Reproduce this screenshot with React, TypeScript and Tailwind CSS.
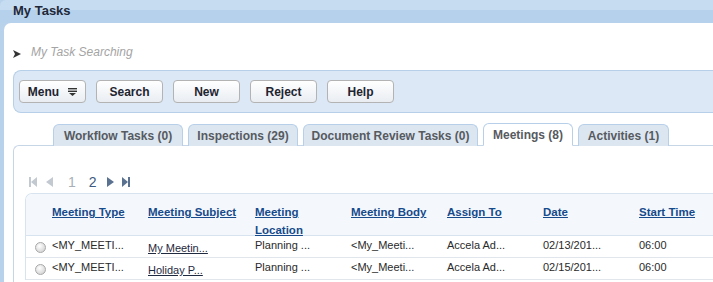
const buttons = ['Search', 'New', 'Reject', 'Help']

const tabs = [
  { label: 'Workflow Tasks (0)', w: 'w-[130px]' },
  { label: 'Inspections (29)', w: 'w-[110px]' },
  { label: 'Document Review Tasks (0)', w: 'w-[175px]' },
  { label: 'Meetings (8)', w: 'w-[90px]', active: true },
  { label: 'Activities (1)', w: 'w-[91px]' },
]

const columns = ['Meeting Type', 'Meeting Subject', 'Meeting Location', 'Meeting Body', 'Assign To', 'Date', 'Start Time']

const rows = [
  ['<MY_MEETI...', 'My Meetin...', 'Planning ...', '<My_Meeti...', 'Accela Ad...', '02/13/201...', '06:00'],
  ['<MY_MEETI...', 'Holiday P...', 'Planning ...', '<My_Meeti...', 'Accela Ad...', '02/15/201...', '06:00'],
]

function MenuIcon() {
  return (
    <svg width="9" height="8" viewBox="0 0 9 8" className="ml-[9px]">
      <rect x="0" y="0" width="9" height="1.4" fill="#333" />
      <rect x="0" y="2.6" width="9" height="1.4" fill="#333" />
      <path d="M1 5 L8 5 L4.5 8 Z" fill="#333" />
    </svg>
  )
}

function PagerIcon({ kind, color }: { kind: 'first' | 'prev' | 'next' | 'last'; color: string }) {
  return (
    <svg width="9" height="10" viewBox="0 0 9 10">
      {kind === 'first' && (
        <>
          <rect x="0" y="0" width="2" height="10" fill={color} />
          <path d="M2 5 L8 0 L8 10 Z" fill={color} />
        </>
      )}
      {kind === 'prev' && <path d="M1 5 L8 0 L8 10 Z" fill={color} />}
      {kind === 'next' && <path d="M1 0 L8 5 L1 10 Z" fill={color} />}
      {kind === 'last' && (
        <>
          <path d="M0 0 L6 5 L0 10 Z" fill={color} />
          <rect x="6" y="0" width="2" height="10" fill={color} />
        </>
      )}
    </svg>
  )
}

export default function App() {
  return (
    <div
      className="w-[713px] h-[282px] overflow-hidden bg-[#b9d2ec] text-[12px]"
      style={{ fontFamily: '"Liberation Sans", Arial, sans-serif' }}
    >
      {/* Portlet title */}
      <div className="h-[23px] rounded-tl-[6px] bg-[linear-gradient(180deg,#c6dcf1_0%,#c6dcf1_42%,#b6d1ec_44%,#b6d1ec_100%)] pl-[13px] flex items-center">
        <span className="font-bold text-[13px] text-[#1e2838] -mt-[2px]">My Tasks</span>
      </div>

      <div className="ml-[4px] h-[259px] bg-white rounded-tl-[7px] pl-[9px]">
        {/* Search toggle */}
        <div className="flex items-center h-[20px] pt-[19px] box-content">
          <svg width="8" height="8" viewBox="0 0 8 8" className="mt-[4px]">
            <path d="M0 0 L8 4 L0 8 L2 4 Z" fill="#333" />
          </svg>
          <span className="ml-[10px] italic text-[#a4a4a4] text-[12px]">My Task Searching</span>
        </div>

        {/* Toolbar */}
        <div className="mt-[8px] h-[43px] rounded-l-[8px] border border-r-0 border-[#b7cfe8] bg-[#dce8f5] flex items-start pt-[9px] pl-[5px] gap-[10px]">
          <button className="w-[67px] h-[23px] rounded-[4px] border border-[#b3b3b3] bg-[linear-gradient(180deg,#ffffff,#e9edf2)] flex items-center justify-center font-bold text-[12px] text-[#1e2430]">
            Menu
            <MenuIcon />
          </button>
          {buttons.map((b) => (
            <button
              key={b}
              className="w-[67px] h-[23px] rounded-[4px] border border-[#b3b3b3] bg-[linear-gradient(180deg,#ffffff,#e9edf2)] flex items-center justify-center font-bold text-[12px] text-[#1e2430]"
            >
              {b}
            </button>
          ))}
        </div>

        {/* Tabs */}
        <div className="mt-[10px] flex items-end gap-[5px] pl-[40px] h-[23px] relative z-10">
          {tabs.map((t) => (
            <div
              key={t.label}
              className={`${t.w} shrink-0 rounded-t-[6px] border border-[#b7cfe8] flex items-center justify-center font-bold text-[12px] text-[#575a5f] ${
                t.active ? 'h-[23px] bg-white border-b-white' : 'h-[22px] bg-[#dbe6f1] border-b-0'
              }`}
            >
              {t.label}
            </div>
          ))}
        </div>

        {/* Tab content */}
        <div className="-mt-px h-[200px] rounded-tl-[6px] border-l border-t border-[#c6d6e6] pl-[11px]">
          {/* Pager */}
          <div className="flex items-center h-[14px] mt-[29px] pl-[4px]">
            <PagerIcon kind="first" color="#c3c9d1" />
            <span className="ml-[7px]">
              <PagerIcon kind="prev" color="#c3c9d1" />
            </span>
            <span className="ml-[14px] text-[14px] text-[#a9afb7]">1</span>
            <span className="ml-[13px] text-[14px] text-[#3d5a80]">2</span>
            <span className="ml-[9px]">
              <PagerIcon kind="next" color="#5a7190" />
            </span>
            <span className="ml-[7px]">
              <PagerIcon kind="last" color="#5a7190" />
            </span>
          </div>

          {/* Grid */}
          <div className="mt-[4px] rounded-tl-[7px] border-l border-t border-[#d7e3ef] overflow-hidden">
            <div className="grid grid-cols-[26px_96px_107px_96px_96px_96px_96px_1fr] bg-[#f4f8fc] h-[42px] border-b border-[#d7e3ef] pt-[9px]">
              <div />
              {columns.map((c) => (
                <div key={c} className="pr-[8px]">
                  <span className="font-bold text-[11.5px] leading-[17px] underline text-[#164a8b]">{c}</span>
                </div>
              ))}
              <div />
            </div>
            {rows.map((r, i) => (
              <div
                key={i}
                className="grid grid-cols-[26px_96px_107px_96px_96px_96px_96px_1fr] h-[22px] border-b border-[#e1e6ec] items-center text-[11px] text-[#2a2a2a]"
              >
                <div className="flex justify-center pl-[2px] pt-[3px]">
                  <span className="w-[11px] h-[11px] rounded-full border border-[#a8a8a8] bg-[radial-gradient(circle_at_40%_35%,#ffffff,#c9c9c9)]" />
                </div>
                {r.map((v, j) => (
                  <div key={j} className={j === 1 ? 'pt-[4px]' : 'pb-[2px]'}>
                    <span className={j === 1 ? 'underline text-[#1f2940]' : ''}>{v}</span>
                  </div>
                ))}
                <div />
              </div>
            ))}
          </div>
        </div>
      </div>
    </div>
  )
}
